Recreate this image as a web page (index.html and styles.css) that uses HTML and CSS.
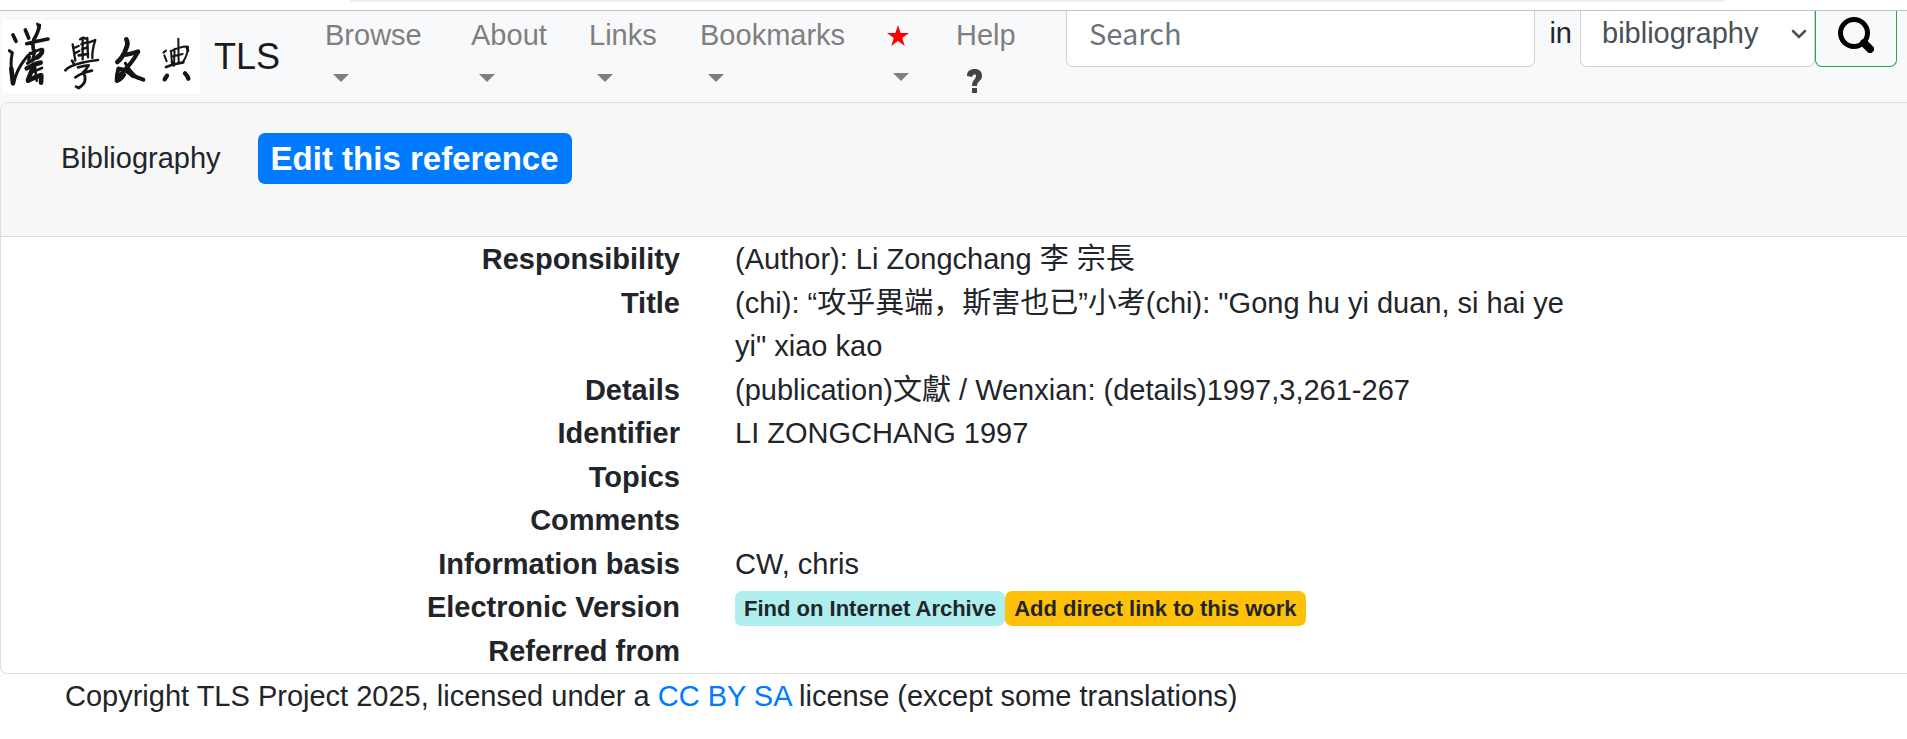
FILE: index.html
```html
<!DOCTYPE html>
<html lang="en">
<head>
<meta charset="utf-8">
<meta name="viewport" content="width=device-width, initial-scale=1">
<title>TLS - Bibliography</title>
<link rel="stylesheet" href="styles.css">
</head>
<body>
<div class="topstrip"><div class="topstrip-pill"></div></div>
<header class="navbar">
  <a class="brand" href="#">
    <svg class="brand-logo" viewBox="6 60 594 219" role="img" aria-label="TLS calligraphy logo">
      <g fill="none" stroke="#151515" stroke-linecap="round" stroke-linejoin="round">
        <path stroke-width="11" d="M39 105L48 124M76 90L86 114M118 76Q116 94 101 120M80 131Q108 124 144 117M98 126L100 148"/>
        <path stroke-width="9" d="M28 152L37 158Q30 190 36 222M42 246Q50 210 73 180M76 176Q86 158 122 148M90 160L86 182M106 152L96 184M82 190Q108 176 128 158"/>
        <path stroke-width="14" d="M34 206L39 250M126 150Q128 160 112 172M80 205Q100 192 122 188M105 192Q92 216 84 240M84 242Q104 232 122 226M124 226L123 248"/>
        <path stroke-width="8" d="M112 72L118 84M104 196L110 242M92 218L126 204"/>
        <path stroke-width="7" d="M218 133L226 182M222 144L236 138M224 160L238 153M240 118Q250 110 256 116M244 133L262 126M246 148L262 142M248 120L248 178M262 114L264 172M268 127L286 120Q276 150 277 174"/>
        <path stroke-width="8" d="M196 211Q214 190 294 180M216 182L222 192M236 166L264 162M234 202Q258 196 266 196Q258 210 248 218M226 232Q250 216 276 212M250 218Q266 246 236 264M236 264L228 260"/>
        <path stroke-width="14" d="M379 118Q386 130 378 146Q370 170 352 186M372 164Q388 164 414 155"/>
        <path stroke-width="12" d="M414 156Q398 186 372 212Q358 228 350 242M350 242Q350 224 355 206M358 206Q382 210 398 228M396 226L430 239"/>
        <path stroke-width="9" d="M352 244Q366 238 374 224M376 190Q388 212 412 234"/>
        <path stroke-width="6" d="M490 158L498 152M493 166L500 184M535 116L536 190M524 146L522 194M513 152L516 192M512 154Q545 138 564 140M564 142Q562 166 550 184M514 170L548 162"/>
        <path stroke-width="8" d="M498 201Q520 191 550 187M516 186L522 196M560 142L564 152"/>
        <path stroke-width="13" d="M501 227L494 238M555 220Q562 226 565 236"/>
      </g>
    </svg>
    <span>TLS</span>
  </a>
  <nav class="menu" aria-label="Main">
    <a class="menu-item" href="#">Browse<span class="caret"></span></a>
    <a class="menu-item" href="#">About<span class="caret"></span></a>
    <a class="menu-item" href="#">Links<span class="caret"></span></a>
    <a class="menu-item" href="#">Bookmarks<span class="caret"></span></a>
    <a class="menu-item" href="#" aria-label="Favourites"><svg class="star" viewBox="0 0 22 21" aria-hidden="true"><path d="M11 0L13.6 8H22L15.2 12.9L17.8 21L11 16L4.2 21L6.8 12.9L0 8H8.4Z" fill="#f00"/></svg><span class="caret"></span></a>
    <a class="menu-item" href="#">Help
      <svg class="help-icon" viewBox="0 0 16 24" aria-hidden="true"><path d="M0 7C0 2 3 0 8 0C12 0 15 2 15 7C15 12 10 12 10 17H5C5 11 9 10 9 7C9 5 6 5 5 8ZM5 19H10V24H5Z" fill="#444"/></svg>
    </a>
  </nav>
  <form class="search">
    <input class="search-box" type="search" placeholder="Search" aria-label="Search">
    <label class="search-in" for="scope">in</label>
    <span class="scope">
      <select class="scope-select" id="scope"><option>bibliography</option></select>
      <svg class="scope-arrow" viewBox="0 0 16 10" aria-hidden="true"><path d="M2 2L8 8L14 2" fill="none" stroke="#495057" stroke-width="2.5" stroke-linecap="round"/></svg>
    </span>
    <button class="search-button" type="button" aria-label="Run search">
      <svg class="search-icon" viewBox="0 0 36 36" aria-hidden="true"><circle cx="16" cy="16" r="13.5" fill="none" stroke="#000" stroke-width="5"/><path d="M26 26L32 32" stroke="#000" stroke-width="8" stroke-linecap="round"/></svg>
    </button>
  </form>
</header>
<main class="card">
  <div class="card-header">
    <h1 class="card-title">Bibliography</h1>
    <button class="badge badge-edit" type="button">Edit this reference</button>
  </div>
  <dl class="details">
    <dt>Responsibility</dt><dd>(Author): Li Zongchang 李 宗長</dd>
    <dt>Title</dt><dd>(chi): “攻乎異端，斯害也已”小考(chi): "Gong hu yi duan, si hai ye yi" xiao kao</dd>
    <dt>Details</dt><dd>(publication)文獻 / Wenxian: (details)1997,3,261-267</dd>
    <dt>Identifier</dt><dd>LI ZONGCHANG 1997</dd>
    <dt>Topics</dt><dd></dd>
    <dt>Comments</dt><dd></dd>
    <dt>Information basis</dt><dd>CW, chris</dd>
    <dt>Electronic Version</dt>
    <dd class="versions"><a class="badge badge-find" href="#">Find on Internet Archive</a><button class="badge badge-add" type="button">Add direct link to this work</button></dd>
    <dt>Referred from</dt><dd></dd>
  </dl>
</main>
<footer class="footer">Copyright TLS Project 2025, licensed under a <a href="#">CC BY SA</a> license (except some translations)</footer>
</body>
</html>
```
FILE: styles.css
```css
* { box-sizing: border-box; }

body {
  margin: 0;
  background: #fff;
  color: #212529;
  font: 29px/1.5 "Liberation Sans", "Noto Sans CJK SC", sans-serif;
}

a { color: #007bff; text-decoration: none; }
button, input, select { font: inherit; margin: 0; }

.topstrip {
  height: 11px;
  padding: 0 182px 0 350px;
  border-bottom: 1px solid #c3c3c5;
}
.topstrip-pill {
  height: 2px;
  background: #f0f0f0;
  border-radius: 0 0 4px 4px;
}

.navbar {
  display: flex;
  align-items: flex-start;
  height: 91px;
  padding: 0 10px 0 2px;
  background: #f8f9fb;
}
.brand {
  display: flex;
  align-items: center;
  gap: 14px;
  padding-top: 9px;
  color: #1b1b1b;
  font-size: 36px;
  line-height: 73px;
}
.brand-logo {
  width: 198px;
  height: 73px;
  background: #fff;
}

.menu {
  display: grid;
  grid-template-columns: 146px 118px 111px 185px 71px 110px;
  margin-left: 45px;
  padding-top: 3px;
}
.menu-item {
  display: flex;
  flex-direction: column;
  align-items: flex-start;
  color: #7f7f7f;
}
.caret {
  margin: 16px 0 0 8px;
  border: 8px solid transparent;
  border-top-color: #7f7f7f;
  border-bottom: 0;
}
.star {
  width: 22px;
  height: 21px;
  margin: 11px 0 11px 2px;
}
.help-icon {
  width: 16px;
  height: 24px;
  margin: 11px 0 0 11px;
}

.search {
  display: flex;
  flex: 1;
}
.search-box,
.scope-select,
.search-button {
  height: 56px;
  border: 1px solid #ced4da;
  border-top: 0;
  border-radius: 0 0 7px 7px;
  background: #fff;
}
.search-box {
  flex: 1;
  min-width: 0;
  padding: 0 22px 14px;
  font-family: "Noto Sans CJK SC", sans-serif;
  appearance: none;
}
.search-box::placeholder { color: #6c757d; opacity: 1; }
.search-in { padding: 1px 8px 0 14px; }
.scope { display: grid; align-items: center; width: 235px; }
.scope-select {
  grid-area: 1 / 1;
  width: 100%;
  padding: 0 21px 10px;
  color: #495057;
  appearance: none;
}
.scope-arrow {
  grid-area: 1 / 1;
  justify-self: end;
  width: 16px;
  height: 10px;
  margin: 0 8px 10px 0;
  pointer-events: none;
}
.search-button {
  display: flex;
  justify-content: center;
  width: 82px;
  padding: 6px 0 0;
  border-color: #28a745;
  background: transparent;
}
.search-icon { width: 36px; height: 36px; }

.card {
  border: 1px solid #dfdfdf;
  border-right: 0;
  border-radius: 7px 0 0 7px;
}
.card-header {
  display: flex;
  align-items: flex-start;
  gap: 37px;
  padding: 30px 60px 52px;
  border-bottom: 1px solid #dadada;
  border-radius: 7px 0 0 0;
  background: #f7f7f7;
}
.card-title {
  margin: 0;
  padding-top: 4px;
  font-size: 29px;
  font-weight: 400;
}

.badge {
  display: block;
  border: 0;
  border-radius: 7px;
  color: #212529;
  font-size: 22px;
  font-weight: 700;
  line-height: 35px;
  padding: 0 9px;
  white-space: nowrap;
}
.badge-edit {
  padding: 0 13px;
  background: #007bff;
  color: #fff;
  font-size: 33px;
  line-height: 51px;
}
.badge-find { background: #afeeee; }
.badge-add { background: #ffc107; }

.details {
  display: grid;
  grid-template-columns: minmax(0, 679fr) minmax(0, 1172fr);
  column-gap: 55px;
  margin: 0;
  padding-top: 1px;
}
.details dt { font-weight: 700; text-align: right; }
.details dd { margin: 0; padding-right: 320px; }
.details .versions { display: flex; align-items: center; padding-top: 2px; }

.footer { padding: 1px 65px 0; }
```
